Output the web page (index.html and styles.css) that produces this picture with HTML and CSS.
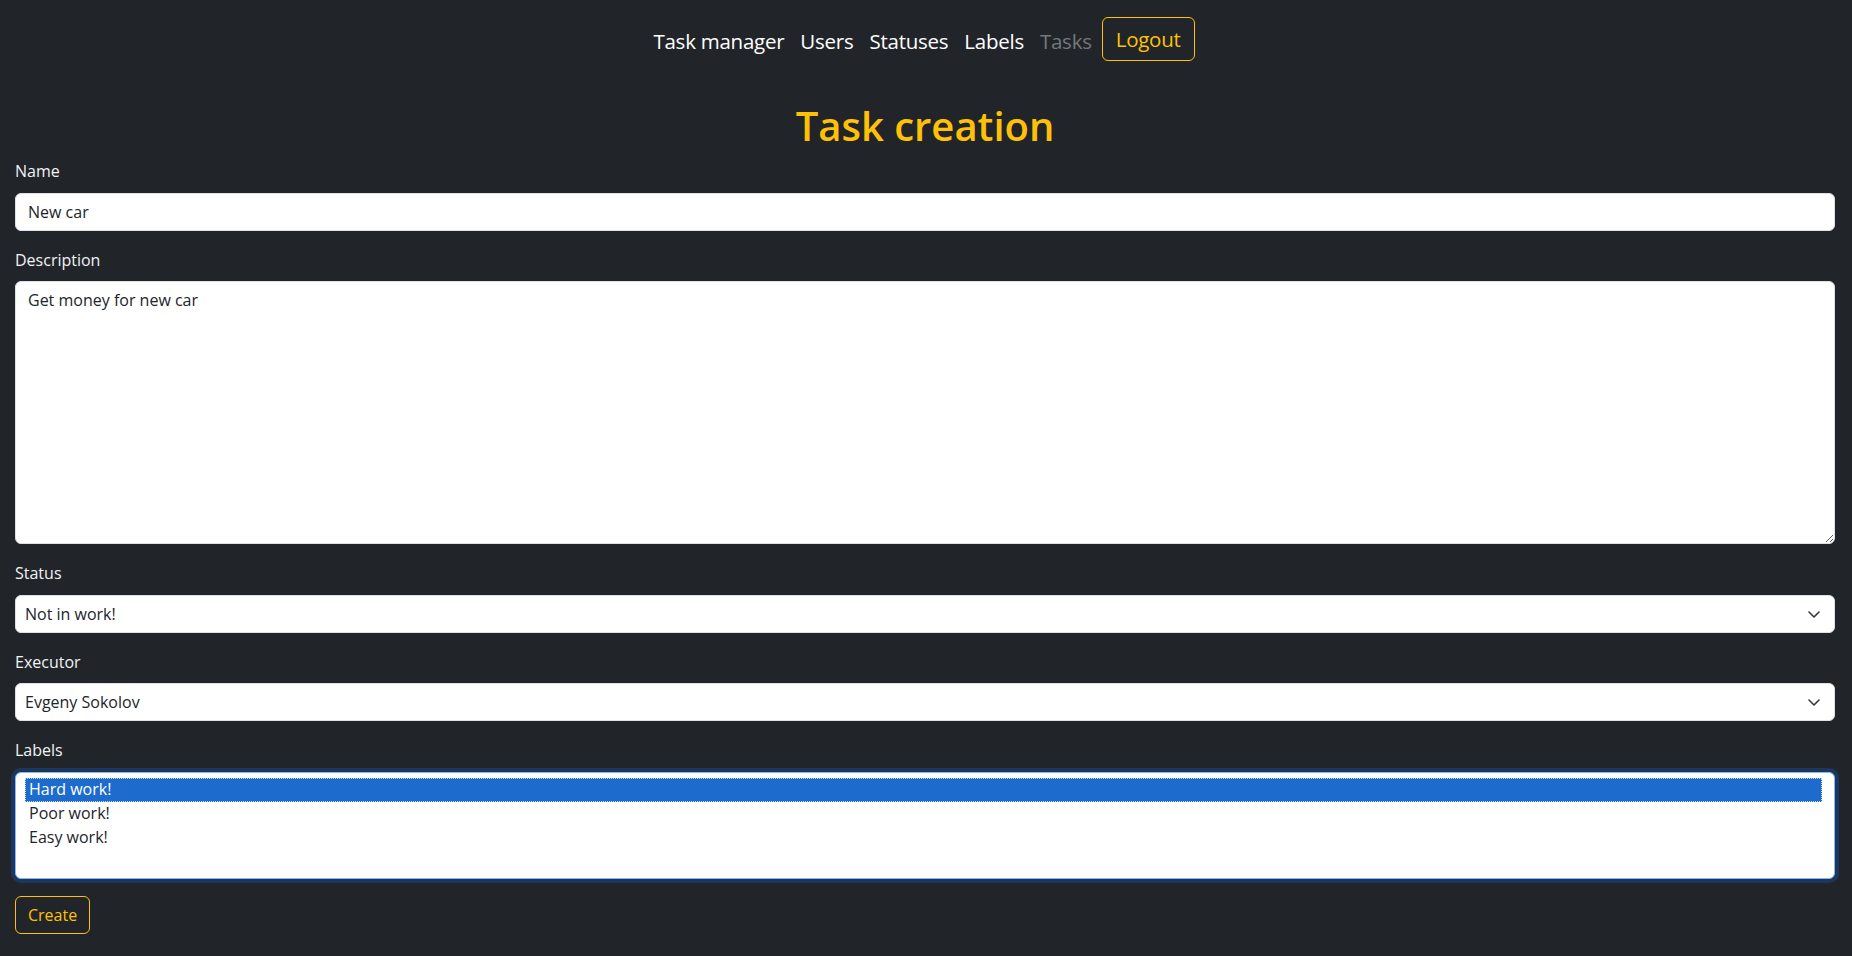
FILE: index.html
```html
<!DOCTYPE html>
<html lang="en">
<head>
<meta charset="utf-8">
<title>Task creation</title>
<link rel="stylesheet" href="styles.css">
</head>
<body>
<header class="topbar">
  <nav class="nav">
    <a class="nav-link" href="#">Task manager</a>
    <a class="nav-link" href="#">Users</a>
    <a class="nav-link" href="#">Statuses</a>
    <a class="nav-link" href="#">Labels</a>
    <a class="nav-link nav-link-muted" href="#">Tasks</a>
    <button class="btn-outline btn-nav" type="button">Logout</button>
  </nav>
</header>
<main class="page">
  <h1 class="title">Task creation</h1>
  <form class="form">
    <div class="field">
      <label class="label" for="name">Name</label>
      <input class="control" id="name" type="text" value="New car">
    </div>
    <div class="field">
      <label class="label" for="desc">Description</label>
      <textarea class="control control-area" id="desc">Get money for new car</textarea>
    </div>
    <div class="field">
      <label class="label" for="status">Status</label>
      <div class="select-wrap">
        <select class="control control-select" id="status"><option>Not in work!</option></select>
        <svg class="chevron" width="12" height="7" viewBox="0 0 12 7" aria-hidden="true"><path d="M1 1l5 5 5-5" fill="none" stroke="#343a40" stroke-width="1.6" stroke-linecap="round" stroke-linejoin="round"/></svg>
      </div>
    </div>
    <div class="field">
      <label class="label" for="executor">Executor</label>
      <div class="select-wrap">
        <select class="control control-select" id="executor"><option>Evgeny Sokolov</option></select>
        <svg class="chevron" width="12" height="7" viewBox="0 0 12 7" aria-hidden="true"><path d="M1 1l5 5 5-5" fill="none" stroke="#343a40" stroke-width="1.6" stroke-linecap="round" stroke-linejoin="round"/></svg>
      </div>
    </div>
    <div class="field">
      <label class="label">Labels</label>
      <div class="listbox" role="listbox" aria-multiselectable="true">
        <div class="option option-selected" role="option" aria-selected="true">Hard work!</div>
        <div class="option" role="option">Poor work!</div>
        <div class="option" role="option">Easy work!</div>
      </div>
    </div>
    <button class="btn-outline btn-create" type="button">Create</button>
  </form>
</main>
</body>
</html>
```

FILE: styles.css
```css
* {
  box-sizing: border-box;
}

html, body {
  margin: 0;
  padding: 0;
}

body {
  background: #212529;
  color: #f1f3f5;
  font-family: "Open Sans", "Noto Sans", sans-serif;
  font-size: 16px;
  line-height: 1.5;
  min-height: 956px;
}

.topbar {
  padding-top: 17px;
}

.nav {
  display: flex;
  justify-content: center;
  align-items: center;
  padding-right: 12px;
  height: 44px;
}

.nav-link {
  color: #ffffff;
  text-decoration: none;
  font-size: 20.5px;
  letter-spacing: -0.25px;
  line-height: 30px;
  padding: 4px 8px 0;
}

.nav-link-muted {
  color: #73777c;
}

.btn-outline {
  background: transparent;
  border: 1px solid #ffc107;
  color: #ffc107;
  font-family: inherit;
  border-radius: 6px;
  cursor: pointer;
}

.btn-nav {
  font-size: 20.5px;
  letter-spacing: -0.25px;
  line-height: 30px;
  height: 44px;
  padding: 6px 13px;
  margin-left: 2px;
}

.page {
  padding: 0 17px 0 15px;
}

.title {
  margin: 41px 0 9px;
  text-align: center;
  color: #ffc107;
  font-size: 40px;
  font-weight: 600;
  line-height: 1.2;
}

.field {
  margin-bottom: 17px;
}

.label {
  display: block;
  margin-bottom: 9.5px;
  line-height: 24px;
}

.control {
  display: block;
  width: 100%;
  height: 38px;
  padding: 6px 12px;
  font-family: inherit;
  font-size: 16px;
  line-height: 24px;
  color: #212529;
  background: #ffffff;
  border: 1px solid #dee2e6;
  border-radius: 6px;
  outline: none;
}

.control-area {
  height: 263px;
  resize: vertical;
}

.select-wrap {
  position: relative;
}

.control-select {
  appearance: none;
  -webkit-appearance: none;
  padding-left: 9px;
  padding-right: 36px;
}

.chevron {
  position: absolute;
  right: 15px;
  top: 16px;
  pointer-events: none;
}

.listbox {
  height: 107px;
  padding: 5.5px 12px 0 9px;
  background: #ffffff;
  color: #212529;
  border: 1px solid #86b7fe;
  border-radius: 6px;
  box-shadow: 0 0 0 4px rgba(13, 110, 253, 0.25);
}

.option {
  height: 24px;
  line-height: 23px;
  padding-left: 4px;
}

.option-selected {
  background: #1d6bcd;
  color: #ffffff;
  outline: 1px dotted rgba(255, 255, 255, 0.75);
  outline-offset: -1px;
}

.btn-create {
  font-size: 16px;
  line-height: 24px;
  padding: 6px 12px;
  height: 38px;
}
```
